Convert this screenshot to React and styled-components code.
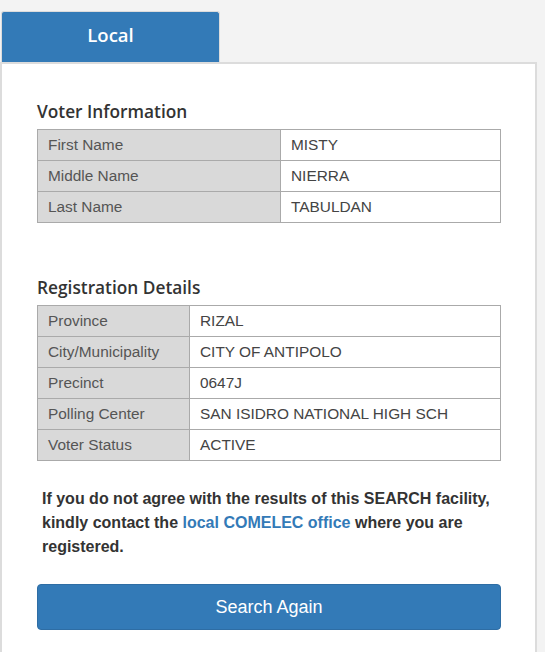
import React from 'react';
import styled, { createGlobalStyle } from 'styled-components';

const GlobalStyle = createGlobalStyle`
  html, body {
    margin: 0;
    padding: 0;
    background: #f3f3f3;
    font-family: "Liberation Sans", Arial, sans-serif;
  }
`

const Wrapper = styled.div`
  width: 537px;
  padding-top: 11px;
`

const TabBar = styled.div`
  display: flex;
`

const Tab = styled.div`
  margin-left: 1px;
  width: 219px;
  height: 51px;
  padding-bottom: 6px;
  box-sizing: border-box;
  display: flex;
  align-items: center;
  justify-content: center;
  background: #337ab7;
  border: 1px solid #dcdcdc;
  border-bottom: none;
  border-radius: 3px 3px 0 0;
  color: #fff;
  font-family: "Open Sans", sans-serif;
  font-weight: 600;
  font-size: 18.5px;
`

const Panel = styled.div`
  background: #fff;
  border: 2px solid #dcdcdc;
  padding: 38px 35px 24px;
`

const Heading = styled.h3`
  margin: ${props => props.first ? '0' : '55px'} 0 8px;
  font-family: "Open Sans", sans-serif;
  font-weight: 600;
  font-size: 17.3px;
  line-height: 19px;
  color: #333;
`

const Table = styled.table`
  width: 464px;
  border-collapse: collapse;
  font-size: 15.4px;
`

const Label = styled.td`
  width: ${props => props.width}px;
  height: 30px;
  padding: 0 10px;
  background: #d9d9d9;
  color: #555;
  border: 1px solid #aaa;
  box-sizing: border-box;
`

const Value = styled.td`
  height: 30px;
  padding: 0 10px;
  color: #444;
  border: 1px solid #aaa;
`

const Note = styled.p`
  margin: 26px 0 25px 5px;
  font-weight: bold;
  font-size: 16px;
  line-height: 24px;
  color: #333;
`

const NoteLink = styled.a`
  color: #337ab7;
  text-decoration: none;
`

const Button = styled.button`
  display: block;
  width: 464px;
  height: 46px;
  background: #337ab7;
  border: 1px solid #2e6da4;
  border-radius: 4px;
  color: #fff;
  font-family: "Liberation Sans", Arial, sans-serif;
  font-size: 18px;
`

const voter = [
  ['First Name', 'MISTY'],
  ['Middle Name', 'NIERRA'],
  ['Last Name', 'TABULDAN'],
];

const registration = [
  ['Province', 'RIZAL'],
  ['City/Municipality', 'CITY OF ANTIPOLO'],
  ['Precinct', '0647J'],
  ['Polling Center', 'SAN ISIDRO NATIONAL HIGH SCH'],
  ['Voter Status', 'ACTIVE'],
];

function InfoTable({ rows, labelWidth }) {
  return (
    <Table>
      <tbody>
        {rows.map(([label, value]) => (
          <tr key={label}>
            <Label width={labelWidth}>{label}</Label>
            <Value>{value}</Value>
          </tr>
        ))}
      </tbody>
    </Table>
  )
}

export default function App() {
  return (
    <Wrapper>
      <GlobalStyle />
      <TabBar>
        <Tab>Local</Tab>
      </TabBar>
      <Panel>
        <Heading first>Voter Information</Heading>
        <InfoTable rows={voter} labelWidth={243} />
        <Heading>Registration Details</Heading>
        <InfoTable rows={registration} labelWidth={152} />
        <Note>
          If you do not agree with the results of this SEARCH facility, kindly contact the{' '}
          <NoteLink href="#">local COMELEC office</NoteLink> where you are registered.
        </Note>
        <Button>Search Again</Button>
      </Panel>
    </Wrapper>
  )
}
